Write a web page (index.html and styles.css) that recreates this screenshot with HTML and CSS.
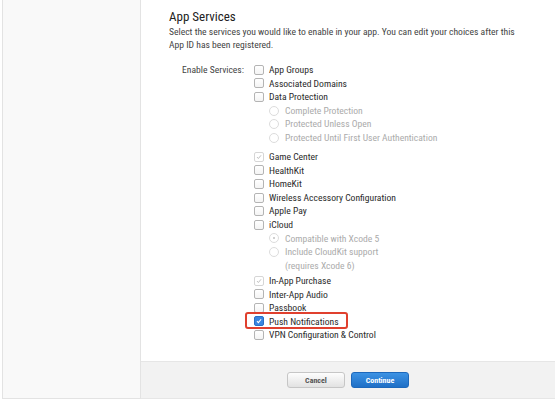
FILE: index.html
```html
<!DOCTYPE html>
<html>
<head>
<meta charset="utf-8">
<link rel="stylesheet" href="styles.css">
</head>
<body>
<div class="frame">
  <aside class="sidebar"></aside>
  <main class="main">
    <section class="content">
      <h1 class="title">App Services</h1>
      <p class="desc">Select the services you would like to enable in your app. You can edit your choices after this App ID has been registered.</p>
      <div class="services">
        <div class="label">Enable Services:</div>
        <div class="list">
          <div class="row"><span class="cb"></span>App Groups</div>
          <div class="row"><span class="cb"></span>Associated Domains</div>
          <div class="row"><span class="cb"></span>Data Protection</div>
          <div class="sub"><span class="rb"></span>Complete Protection</div>
          <div class="sub"><span class="rb"></span>Protected Unless Open</div>
          <div class="sub"><span class="rb"></span>Protected Until First User Authentication</div>
          <div class="row gap"><span class="cb dis"><svg viewBox="0 0 9 9"><path d="M2.3 4.6 L3.8 6.2 L6.8 2.6" fill="none" stroke="#b0b0b0" stroke-width="0.9"/></svg></span>Game Center</div>
          <div class="row"><span class="cb"></span>HealthKit</div>
          <div class="row"><span class="cb"></span>HomeKit</div>
          <div class="row"><span class="cb"></span>Wireless Accessory Configuration</div>
          <div class="row"><span class="cb"></span>Apple Pay</div>
          <div class="row"><span class="cb"></span>iCloud</div>
          <div class="sub"><span class="rb dot"></span>Compatible with Xcode 5</div>
          <div class="sub"><span class="rb"></span>Include CloudKit support</div>
          <div class="sub cont">(requires Xcode 6)</div>
          <div class="row gap2"><span class="cb dis"><svg viewBox="0 0 9 9"><path d="M2.3 4.6 L3.8 6.2 L6.8 2.6" fill="none" stroke="#b0b0b0" stroke-width="0.9"/></svg></span>In-App Purchase</div>
          <div class="row"><span class="cb"></span>Inter-App Audio</div>
          <div class="row"><span class="cb"></span>Passbook</div>
          <div class="row hl"><span class="cb on"><svg viewBox="0 0 9 9"><path d="M2.2 4.6 L3.8 6.3 L6.9 2.5" fill="none" stroke="#fff" stroke-width="1.2"/></svg></span>Push Notifications</div>
          <div class="row"><span class="cb"></span>VPN Configuration &amp; Control</div>
        </div>
      </div>
    </section>
    <footer class="footer">
      <button class="btn cancel">Cancel</button>
      <button class="btn primary">Continue</button>
    </footer>
  </main>
</div>
</body>
</html>
```
FILE: styles.css
```css
html, body {
  margin: 0;
  padding: 0;
  background: #fff;
}
body {
  font-family: "Roboto", "Liberation Sans", sans-serif;
  font-stretch: 75%;
  color: #333;
}
.frame {
  display: flex;
  margin-left: 2px;
  width: 553px;
  height: 399px;
}
.sidebar {
  width: 137px;
  flex: none;
  background: #f9f9f9;
  border-left: 1px solid #e3e3e3;
  border-right: 1px solid #e3e3e3;
  border-bottom: 1px solid #e3e3e3;
}
.main {
  flex: 1;
  display: flex;
  flex-direction: column;
}
.content {
  flex: 1;
  padding: 9px 0 0 28px;
}
.title {
  margin: 0;
  font-size: 13px;
  font-weight: normal;
  color: #222;
  line-height: 16px;
}
.desc {
  margin: 0;
  font-size: 9.6px;
  line-height: 13px;
  color: #444;
  width: 362px;
}
.services {
  display: flex;
  margin-top: 12px;
  font-size: 9.6px;
  line-height: 13.6px;
}
.label {
  width: 75px;
  text-align: right;
  color: #444;
  padding-right: 10px;
}
.list {
  display: flex;
  flex-direction: column;
}
.row {
  display: flex;
  align-items: center;
  height: 13.6px;
  color: #2a2a2a;
  position: relative;
}
.sub {
  display: flex;
  align-items: center;
  height: 13.6px;
  color: #ababab;
  padding-left: 15px;
}
.sub.cont { padding-left: 31px; }
.gap { margin-top: 5.5px; }
.gap2 { margin-top: 1.5px; }
.cb {
  width: 8px;
  height: 8px;
  border: 1px solid #b4b4b4;
  border-radius: 2px;
  background: linear-gradient(#ffffff, #f4f4f4);
  margin-right: 5px;
  flex: none;
  display: flex;
}
.cb svg { width: 8px; height: 8px; }
.cb.dis { border-color: #d6d6d6; background: #fff; }
.cb.on {
  background: #3a86e0;
  border-color: #2a6fc4;
}
.rb {
  width: 8px;
  height: 8px;
  border: 1px solid #dcdcdc;
  border-radius: 50%;
  margin-right: 6px;
  flex: none;
  display: flex;
  align-items: center;
  justify-content: center;
}
.rb.dot::after {
  content: "";
  width: 2px;
  height: 2px;
  border-radius: 50%;
  background: #c0c0c0;
}
.hl::before {
  content: "";
  position: absolute;
  left: -9px;
  top: -3px;
  width: 99px;
  height: 13px;
  border: 2px solid #e0402e;
  border-radius: 3px;
}
.footer {
  height: 36px;
  background: #f2f2f2;
  border-top: 1px solid #e6e6e6;
  border-bottom: 1px solid #e6e6e6;
  display: flex;
  justify-content: center;
  align-items: center;
  gap: 6px;
}
.btn {
  font-family: "Roboto", "Liberation Sans", sans-serif;
  font-stretch: 75%;
  font-size: 8px;
  font-weight: bold;
  height: 16px;
  border-radius: 3px;
  padding: 0;
}
.cancel {
  width: 58px;
  color: #555;
  background: linear-gradient(#fdfdfd, #e2e2e2);
  border: 1px solid #c6c6c6;
}
.primary {
  width: 58px;
  color: #fff;
  background: linear-gradient(#3c92e4, #1f6fc6);
  border: 1px solid #1d68bb;
}
```
